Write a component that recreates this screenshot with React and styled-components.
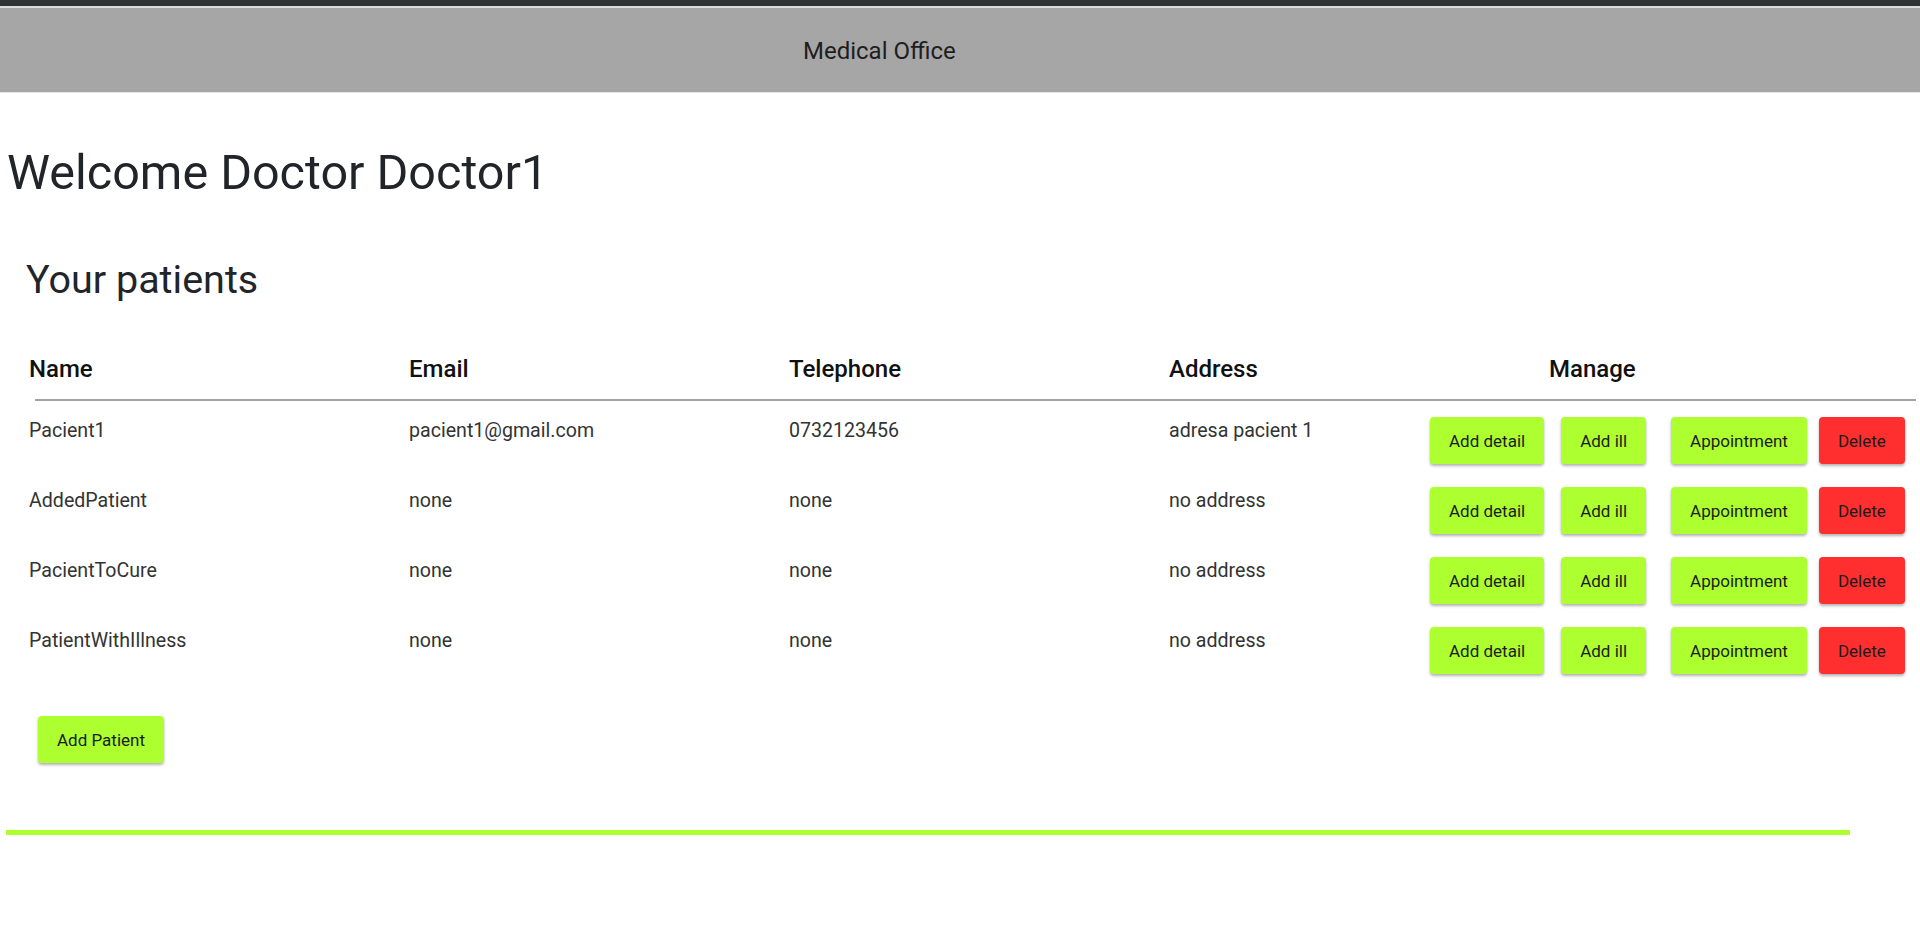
import styled, { createGlobalStyle } from 'styled-components'

const GlobalStyle = createGlobalStyle`
    body {
        margin: 0;
        background: #ffffff;
        font-family: Roboto, "Liberation Sans", Arial, sans-serif;
        color: #212529;
    }
`

const TopStrip = styled.div`
    height: 6px;
    background-color: #2f3337;
    border-bottom: 2px solid #dcdcdc;
`
const NavBar = styled.header`
    display: flex;
    align-items: center;
    height: 84px;
    padding-left: 803px;
    background-color: #a6a6a6;
    border-bottom: 1px solid #e6e6e6;
`
const Brand = styled.span`
    font-size: 24px;
    color: #1e1e1e;
    margin-top: 2px;
`
const Title = styled.h1`
    margin: 51px 0 0 7px;
    font-size: 48.5px;
    font-weight: 400;
    line-height: 58px;
`
const Subtitle = styled.h2`
    margin: 54px 0 0 26px;
    font-size: 39.5px;
    font-weight: 400;
    line-height: 47px;
`
const Table = styled.div`
    margin: 52px 0 0 29px;
    width: 1887px;
`
const HeaderRow = styled.div`
    display: grid;
    grid-template-columns: 380px 380px 380px 380px 1fr;
    padding-bottom: 16px;
    font-size: 24px;
    font-weight: 500;
    line-height: 28px;
    color: #111;
`
const Divider = styled.div`
    height: 2px;
    margin-left: 6px;
    background-color: #a2a2a2;
`
const Row = styled.div`
    display: grid;
    grid-template-columns: 380px 380px 380px 261px auto;
    align-items: start;
    height: 70px;
    box-sizing: border-box;
    padding-top: 16px;
`
const Cell = styled.div`
    padding-top: 2px;
    font-size: 19.6px;
    line-height: 24px;
    color: #333;
`
const Actions = styled.div`
    display: flex;
`
const Button = styled.button`
    height: 47px;
    padding: 0 19px;
    margin-left: ${(props) => props.$ml || 0}px;
    border: none;
    border-radius: 4px;
    background-color: ${(props) => (props.$danger ? '#ff2f2f' : '#adff2f')};
    color: #1c1c1c;
    font-family: Roboto, "Liberation Sans", Arial, sans-serif;
    font-size: 17px;
    box-shadow: 0 2px 3px rgba(0, 0, 0, 0.3);
    cursor: pointer;
`
const AddButton = styled(Button)`
    margin: 35px 0 0 9px;
`
const GreenLine = styled.div`
    width: 1844px;
    height: 5px;
    margin: 67px 0 0 6px;
    background-color: #adff2f;
`

const patients = [
    { name: 'Pacient1', email: 'pacient1@gmail.com', phone: '0732123456', address: 'adresa pacient 1' },
    { name: 'AddedPatient', email: 'none', phone: 'none', address: 'no address' },
    { name: 'PacientToCure', email: 'none', phone: 'none', address: 'no address' },
    { name: 'PatientWithIllness', email: 'none', phone: 'none', address: 'no address' },
]

function App() {
    return (
        <>
            <GlobalStyle />
            <TopStrip />
            <NavBar>
                <Brand>Medical Office</Brand>
            </NavBar>
            <Title>Welcome Doctor Doctor1</Title>
            <Subtitle>Your patients</Subtitle>
            <Table>
                <HeaderRow>
                    <div>Name</div>
                    <div>Email</div>
                    <div>Telephone</div>
                    <div>Address</div>
                    <div>Manage</div>
                </HeaderRow>
                <Divider />
                {patients.map((p) => (
                    <Row key={p.name}>
                        <Cell>{p.name}</Cell>
                        <Cell>{p.email}</Cell>
                        <Cell>{p.phone}</Cell>
                        <Cell>{p.address}</Cell>
                        <Actions>
                            <Button>Add detail</Button>
                            <Button $ml={17}>Add ill</Button>
                            <Button $ml={25}>Appointment</Button>
                            <Button $ml={12} $danger>Delete</Button>
                        </Actions>
                    </Row>
                ))}
                <AddButton>Add Patient</AddButton>
            </Table>
            <GreenLine />
        </>
    )
}

export default App
